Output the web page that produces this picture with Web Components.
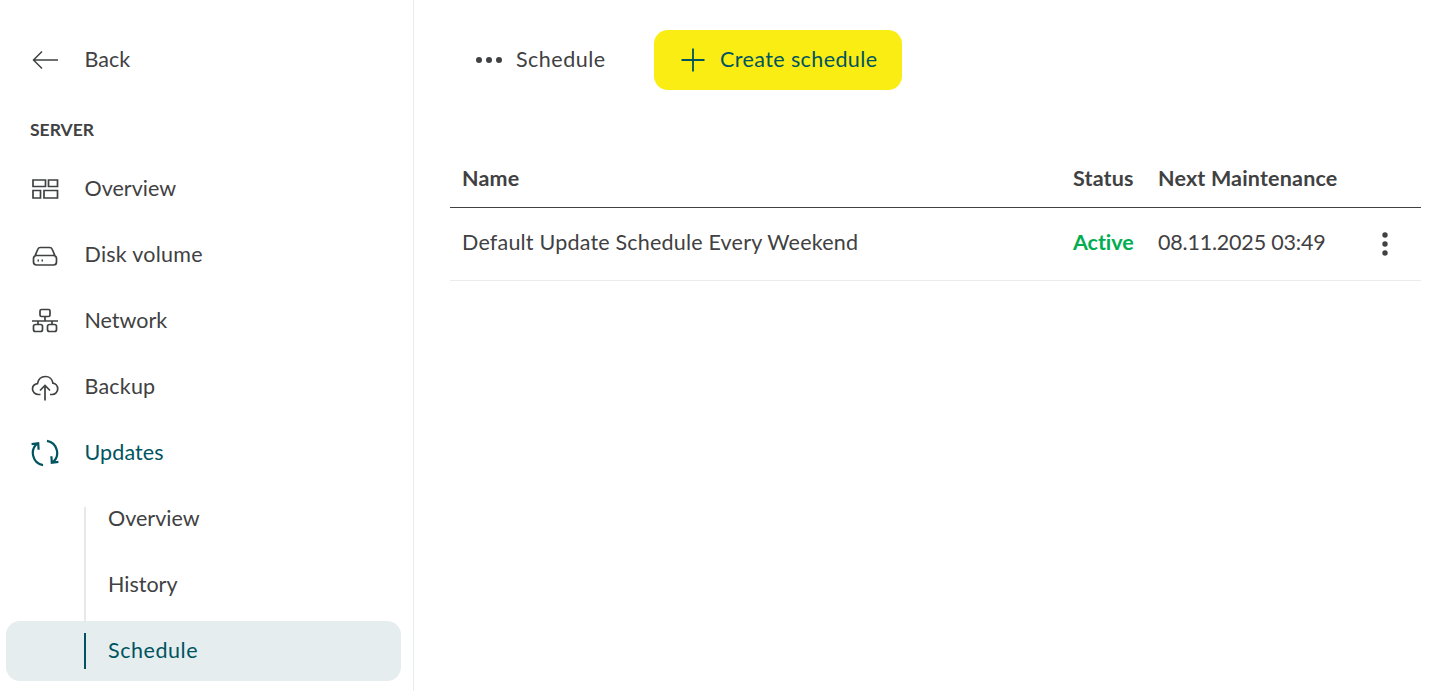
<!DOCTYPE html>
<html>
<head>
<meta charset="utf-8">
<title>Schedule</title>
<style>
html, body { margin: 0; height: 100%; background: #fff; overflow: hidden; }
body { font-family: Lato, "Noto Sans", sans-serif; color: #3f4142; }
app-shell { height: 691px; }
</style>
</head>
<body>
<app-shell>
  <side-nav slot="side">
    <nav-item icon="back" style="margin-bottom:22px">Back</nav-item>
    <nav-title>SERVER</nav-title>
    <nav-item icon="overview">Overview</nav-item>
    <nav-item icon="disk" style="letter-spacing:.25px">Disk volume</nav-item>
    <nav-item icon="network">Network</nav-item>
    <nav-item icon="backup" style="letter-spacing:.2px">Backup</nav-item>
    <nav-item icon="updates" current style="letter-spacing:.1px">Updates</nav-item>
    <nav-sub>Overview</nav-sub>
    <nav-sub>History</nav-sub>
    <nav-sub active style="letter-spacing:.55px">Schedule</nav-sub>
  </side-nav>
  <schedule-page></schedule-page>
</app-shell>
<script>
const ICONS = {
    back: '<path d="M27 14H2.500M11 5.500 2.500 14l8.500 8.500"/>',
    overview: '<path d="M2 5h12.500v6.500H2zM17.500 5h9v6.500h-9zM2 15.500h7.500v7.500H2zM13 15.500h13.500v7.500H13z"/>',
    disk: '<path d="M3.500 16 6.800 8.300Q7.500 6.500 9.500 6.500h9q2 0 2.700 1.800L24.500 16M5.500 14.500h17q3 0 3 3v3.500q0 3-3 3h-17q-3 0-3-3v-3.500q0-3 3-3z"/><path d="M6.500 19.500h1.500M10.500 19.500h1.500" stroke-width="2"/>',
    network: '<path d="M10.500 2.500h7q1.500 0 1.500 1.500v4q0 1.500-1.500 1.500h-7Q9 9.500 9 8V4q0-1.500 1.500-1.500zM14 9.500v4.500M1 14h26M7 14v3.500M21 14v3.500M4.500 17.500h5q2 0 2 2v3q0 2-2 2h-5q-2 0-2-2v-3q0-2 2-2zM18.500 17.500h5q2 0 2 2v3q0 2-2 2h-5q-2 0-2-2v-3q0-2 2-2z"/>',
    backup: '<path d="M9.500 21.500H7.500C4.200 21.500 1.500 19 1.500 16c0-2.800 2-5 5-5.400C7.300 6.300 10.500 3.500 14.500 3.500c3.800 0 6.800 2.800 7.400 6.700 2.800.4 4.800 2.900 4.800 5.700 0 3-2.500 5.600-5.500 5.600h-2.200"/><path d="M14 27.500V12.500M9 17.500l5-5 5 5"/>',
    updates: '<path d="M6.600 4.400A12.300 12.300 0 0 0 12 26.200M.6 5.200l6.600-1 .4 6.600M21.400 23.600A12.300 12.300 0 0 0 16 1.800M27.400 22.800l-6.600 1-.4-6.600"/>'
};

class AppShell extends HTMLElement {
    constructor() {
        super();
        this.attachShadow({ mode: 'open' });
        this.shadowRoot.innerHTML = `
            <style>
                :host { display: grid; grid-template-columns: 414px 1fr; }
                ::slotted([slot=side]) { border-right: 1px solid #e9ebec; }
            </style>
            <slot name="side"></slot>
            <slot></slot>
        `;
    }
}

class SideNav extends HTMLElement {
    constructor() {
        super();
        this.attachShadow({ mode: 'open' });
        this.shadowRoot.innerHTML = `
            <style>
                :host { display: flex; flex-direction: column; gap: 6px; box-sizing: border-box; padding: 30px 12px 0 6px; height: 691px; }
            </style>
            <slot></slot>
        `;
    }
}

class NavItem extends HTMLElement {
    constructor() {
        super();
        this.attachShadow({ mode: 'open' });
    }

    connectedCallback() {
        const icon = ICONS[this.getAttribute('icon')] || '';
        this.shadowRoot.innerHTML = `
            <style>
                :host { display: flex; align-items: center; height: 60px; padding-left: 25px; font-size: 21.500px; color: #3f4142; }
                :host([current]) { color: #00545f; }
                svg { width: 28px; height: 28px; margin-right: 26px; fill: none; stroke: currentColor; stroke-width: 1.700; flex: none; }
                :host([current]) svg { stroke-width: 2.200; }
                :host([icon=back]) svg { stroke-width: 1.500; }
                span { position: relative; top: -1px; margin-left: -.500px; }
            </style>
            <svg viewBox="0 0 28 28">${icon}</svg>
            <span><slot></slot></span>
        `;
    }
}

class NavTitle extends HTMLElement {
    constructor() {
        super();
        this.attachShadow({ mode: 'open' });
        this.shadowRoot.innerHTML = `
            <style>
                :host { display: block; height: 23px; line-height: 23px; padding-left: 24px; margin-bottom: 12px; font-size: 17.500px; font-weight: 700; color: #3f4142; }
            </style>
            <slot></slot>
        `;
    }
}

class NavSub extends HTMLElement {
    constructor() {
        super();
        this.attachShadow({ mode: 'open' });
        this.shadowRoot.innerHTML = `
            <style>
                :host { display: flex; align-items: center; position: relative; height: 60px; padding-left: 102px; font-size: 21.500px; color: #3f4142; border-radius: 14px; }
                :host::before { content: ''; position: absolute; left: 78px; width: 2px; top: 0; bottom: -6px; background: #e6e8e9; }
                :host(:first-of-type)::before { top: 18px; }
                :host([active]) { background: #e6edef; color: #00545f; width: 395px; box-sizing: border-box; }
                :host([active])::before { top: 12px; bottom: 12px; background: #00545f; }
                span { position: relative; top: -1px; }
            </style>
            <span><slot></slot></span>
        `;
    }
}

class YellowButton extends HTMLElement {
    constructor() {
        super();
        this.attachShadow({ mode: 'open' });
        this.shadowRoot.innerHTML = `
            <style>
                :host { display: inline-flex; align-items: center; box-sizing: border-box; height: 60px; width: 248px; padding-left: 25px; border-radius: 14px; background: #f9ed14; color: #00545f; font-size: 21.500px; letter-spacing: .4px; }
                svg { width: 28px; height: 28px; margin-right: 13px; fill: none; stroke: currentColor; stroke-width: 1.800; }
                span { position: relative; top: -1px; }
            </style>
            <svg viewBox="0 0 28 28"><path d="M14 2.500v23M2.500 14h23"/></svg>
            <span><slot></slot></span>
        `;
    }
}

class SchedulePage extends HTMLElement {
    constructor() {
        super();
        this.attachShadow({ mode: 'open' });
        this.shadowRoot.innerHTML = `
            <style>
                :host { display: block; padding: 30px 22px 0 36px; }
                .bar { display: flex; align-items: center; height: 60px; margin-bottom: 58px; }
                .more { display: flex; align-items: center; width: 204px; font-size: 21.500px; }
                .more svg { width: 28px; height: 8px; margin: 0 13px 0 25px; fill: #3f4142; }
                .more span { position: relative; top: -1px; letter-spacing: .5px; }
                .row { display: grid; grid-template-columns: 611px 85px 1fr 72px; align-items: center; padding-left: 12px; margin: 0; }
                .head { height: 59px; font-weight: 700; font-size: 21.500px; border-bottom: 1px solid #3f4142; letter-spacing: .18px; }
                .body { height: 72px; font-size: 21.500px; border-bottom: 1px solid #e9ebec; }
                .body span { position: relative; top: -2px; }
                .body .name { letter-spacing: .2px; }
                .body .active { color: #00ad50; font-weight: 700; letter-spacing: -.05px; }
                .body .date { letter-spacing: -.2px; }
                .dots { width: 6px; height: 24px; justify-self: center; fill: #3f4142; display: block; position: relative; top: 0; }
            </style>
            <div class="bar">
                <div class="more">
                    <svg viewBox="0 0 28 8"><circle cx="4" cy="4" r="3"/><circle cx="14" cy="4" r="3"/><circle cx="24" cy="4" r="3"/></svg>
                    <span>Schedule</span>
                </div>
                <yellow-button>Create schedule</yellow-button>
            </div>
            <div class="row head"><span>Name</span><span>Status</span><span>Next Maintenance</span><span></span></div>
            <div class="row body"><span class="name">Default Update Schedule Every Weekend</span><span class="active">Active</span><span class="date">08.11.2025 03:49</span>
                <svg class="dots" viewBox="0 0 6 24"><circle cx="3" cy="3" r="2.700"/><circle cx="3" cy="12" r="2.700"/><circle cx="3" cy="21" r="2.700"/></svg>
            </div>
        `;
    }
}

customElements.define('app-shell', AppShell);
customElements.define('side-nav', SideNav);
customElements.define('nav-item', NavItem);
customElements.define('nav-title', NavTitle);
customElements.define('nav-sub', NavSub);
customElements.define('yellow-button', YellowButton);
customElements.define('schedule-page', SchedulePage);
</script>
</body>
</html>
